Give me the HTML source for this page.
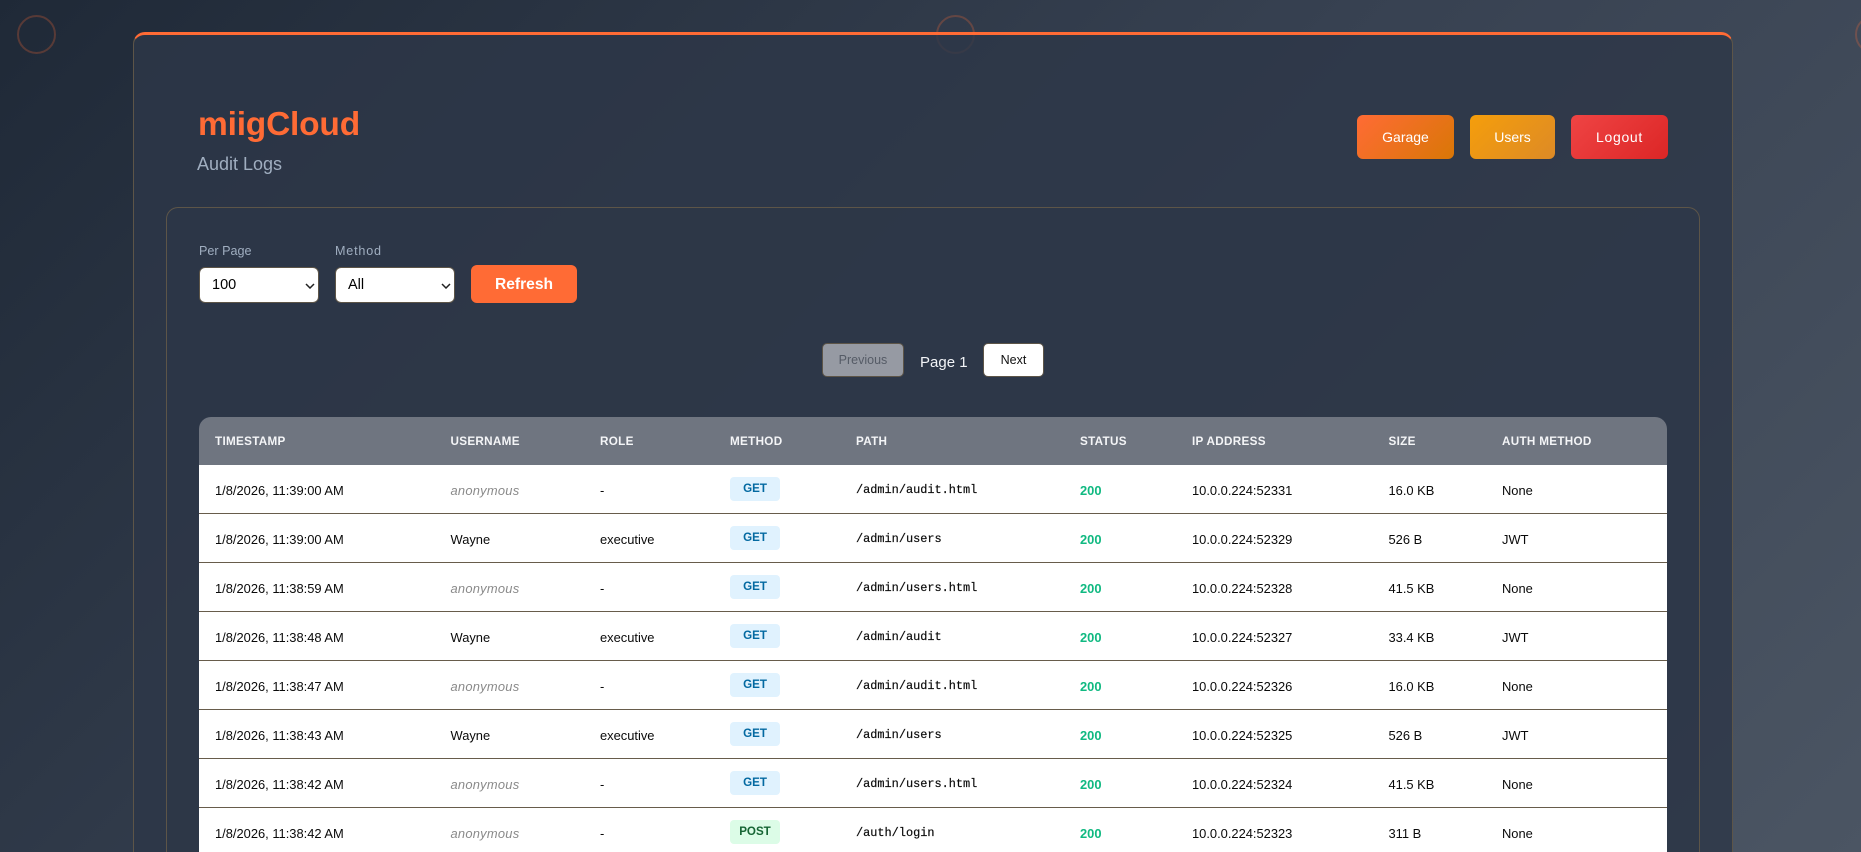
<!DOCTYPE html>
<html lang="en"><head><meta charset="utf-8"><title>miigCloud - Audit Logs</title>
<style>
*{box-sizing:border-box;margin:0;padding:0}
html,body{width:1861px;height:852px;overflow:hidden}
body{position:relative;background:linear-gradient(135deg,#1f2937 0%,#374151 50%,#4b5563 100%);font-family:"Liberation Sans",Arial,sans-serif;color:#111}
.c{position:absolute;top:15px;width:39px;height:39px;border:2px solid rgba(255,107,53,.25);border-radius:50%}
.clip{position:absolute;left:1855px;top:0;width:6px;height:60px;overflow:hidden}
.clip .c{left:0}
.card{position:absolute;left:133px;top:32px;width:1600px;height:820px;background:rgba(45,55,72,.82);border:1px solid #5d5548;border-bottom:0;border-top:3px solid #ff6b35;border-radius:12px 12px 0 0}
.panel{position:absolute;left:166px;top:207px;width:1534px;height:645px;background:rgba(45,55,72,.6);border:1px solid #5d5548;border-bottom:0;border-radius:12px 12px 0 0}
.a{position:absolute;white-space:nowrap}
h1{left:198px;top:105px;font-size:33.5px;line-height:40px;font-weight:700;color:#ff6b35;letter-spacing:-.2px}
.sub{left:197px;top:152px;font-size:18px;line-height:24px;color:#a0aec0}
.btn{position:absolute;top:115px;height:44px;border-radius:6px;color:#fff;font-size:14px;line-height:44px;text-align:center;font-weight:500}
.lab{top:243px;font-size:12.6px;line-height:16px;color:#a0aec0}
select{position:absolute;top:267px;height:36px;width:120px;background:#fff;border:1px solid #5d5548;border-radius:6px;font-family:"Liberation Sans",Arial,sans-serif;font-size:14.5px;color:#000;padding-left:12px;appearance:none;-webkit-appearance:none}
.chev{position:absolute;top:283px;width:10px;height:6px}
.ref{position:absolute;left:471px;top:265px;width:106px;height:38px;background:#ff6b35;border-radius:6px;color:#fff;font-weight:700;font-size:15.6px;line-height:39px;text-align:center}
.pg{position:absolute;top:343px;height:34px;border-radius:5px;border:1px solid #5d5548;font-size:12.5px;line-height:33px;text-align:center}
.tw{position:absolute;left:199px;top:417px;width:1468px;height:435px;overflow:hidden}
table{width:1468px;border-collapse:separate;border-spacing:0;table-layout:fixed;border-radius:12px 12px 0 0}
th{height:48px;background:#6f7580;color:#f4f5f7;font-size:11.7px;font-weight:700;text-align:left;padding:0 0 0 16px;letter-spacing:.3px}
th:first-child{border-radius:12px 0 0 0}th:last-child{border-radius:0 12px 0 0}
td{height:49px;border-bottom:1px solid #675c4b;font-size:12.9px;color:#0a0a0a;padding:2px 0 0 16px;white-space:nowrap;background:#fff}
td.b{padding-top:0}
td.an{color:#8a8a8a;font-style:italic;letter-spacing:.25px}
.m{display:block;width:50px;height:24px;border-radius:4px;background:#e0f2fe;color:#0369a1;font-size:11.6px;font-weight:700;line-height:23px;text-align:center}
.p{background:#dcfce7;color:#166534}
td.path{font-family:"Liberation Mono",monospace;font-size:11.9px;-webkit-text-stroke:.2px #111}
td.s{color:#10b981;font-weight:700}
</style></head><body>
<div class="c" style="left:17px"></div><div class="c" style="left:936px"></div><div class="clip"><div class="c"></div></div>
<div class="card"></div><div class="panel"></div>
<h1 class="a">miigCloud</h1><div class="a sub">Audit Logs</div>
<div class="btn" style="left:1357px;width:97px;background:linear-gradient(135deg,#ff6b35,#d97706)">Garage</div>
<div class="btn" style="left:1470px;width:85px;background:linear-gradient(135deg,#f59e0b,#dd8a26)">Users</div>
<div class="btn" style="left:1571px;width:97px;background:linear-gradient(135deg,#ef4444,#dc2626);letter-spacing:.7px">Logout</div>
<div class="a lab" style="left:199px">Per Page</div><div class="a lab" style="left:335px;letter-spacing:.8px">Method</div>
<select style="left:199px"><option>100</option></select>
<svg class="chev" style="left:304.5px" viewBox="0 0 10 6"><path d="M1 1l4 4 4-4" fill="none" stroke="#222" stroke-width="1.5"/></svg>
<select style="left:335px"><option>All</option></select>
<svg class="chev" style="left:440.5px" viewBox="0 0 10 6"><path d="M1 1l4 4 4-4" fill="none" stroke="#222" stroke-width="1.5"/></svg>
<div class="ref">Refresh</div>
<div class="pg" style="left:822px;width:82px;background:#969aa3;color:#555b66">Previous</div>
<div class="a" style="left:920px;top:353px;font-size:15px;line-height:20px;color:#f2f4f7">Page 1</div>
<div class="pg" style="left:983px;width:61px;background:#fff;color:#111">Next</div>
<div class="tw"><table><colgroup><col style="width:235.5px"><col style="width:149.5px"><col style="width:130px"><col style="width:126px"><col style="width:224px"><col style="width:112px"><col style="width:196.5px"><col style="width:113.5px"><col style="width:181px"></colgroup>
<thead><tr><th>TIMESTAMP</th><th>USERNAME</th><th>ROLE</th><th>METHOD</th><th>PATH</th><th>STATUS</th><th>IP ADDRESS</th><th>SIZE</th><th>AUTH METHOD</th></tr></thead>
<tbody>
<tr><td>1/8/2026, 11:39:00 AM</td><td class="an">anonymous</td><td>-</td><td class="b"><span class="m">GET</span></td><td class="path">/admin/audit.html</td><td class="s">200</td><td>10.0.0.224:52331</td><td>16.0 KB</td><td>None</td></tr>
<tr><td>1/8/2026, 11:39:00 AM</td><td>Wayne</td><td>executive</td><td class="b"><span class="m">GET</span></td><td class="path">/admin/users</td><td class="s">200</td><td>10.0.0.224:52329</td><td>526 B</td><td>JWT</td></tr>
<tr><td>1/8/2026, 11:38:59 AM</td><td class="an">anonymous</td><td>-</td><td class="b"><span class="m">GET</span></td><td class="path">/admin/users.html</td><td class="s">200</td><td>10.0.0.224:52328</td><td>41.5 KB</td><td>None</td></tr>
<tr><td>1/8/2026, 11:38:48 AM</td><td>Wayne</td><td>executive</td><td class="b"><span class="m">GET</span></td><td class="path">/admin/audit</td><td class="s">200</td><td>10.0.0.224:52327</td><td>33.4 KB</td><td>JWT</td></tr>
<tr><td>1/8/2026, 11:38:47 AM</td><td class="an">anonymous</td><td>-</td><td class="b"><span class="m">GET</span></td><td class="path">/admin/audit.html</td><td class="s">200</td><td>10.0.0.224:52326</td><td>16.0 KB</td><td>None</td></tr>
<tr><td>1/8/2026, 11:38:43 AM</td><td>Wayne</td><td>executive</td><td class="b"><span class="m">GET</span></td><td class="path">/admin/users</td><td class="s">200</td><td>10.0.0.224:52325</td><td>526 B</td><td>JWT</td></tr>
<tr><td>1/8/2026, 11:38:42 AM</td><td class="an">anonymous</td><td>-</td><td class="b"><span class="m">GET</span></td><td class="path">/admin/users.html</td><td class="s">200</td><td>10.0.0.224:52324</td><td>41.5 KB</td><td>None</td></tr>
<tr><td>1/8/2026, 11:38:42 AM</td><td class="an">anonymous</td><td>-</td><td class="b"><span class="m p">POST</span></td><td class="path">/auth/login</td><td class="s">200</td><td>10.0.0.224:52323</td><td>311 B</td><td>None</td></tr>
</tbody></table></div>
</body></html>
